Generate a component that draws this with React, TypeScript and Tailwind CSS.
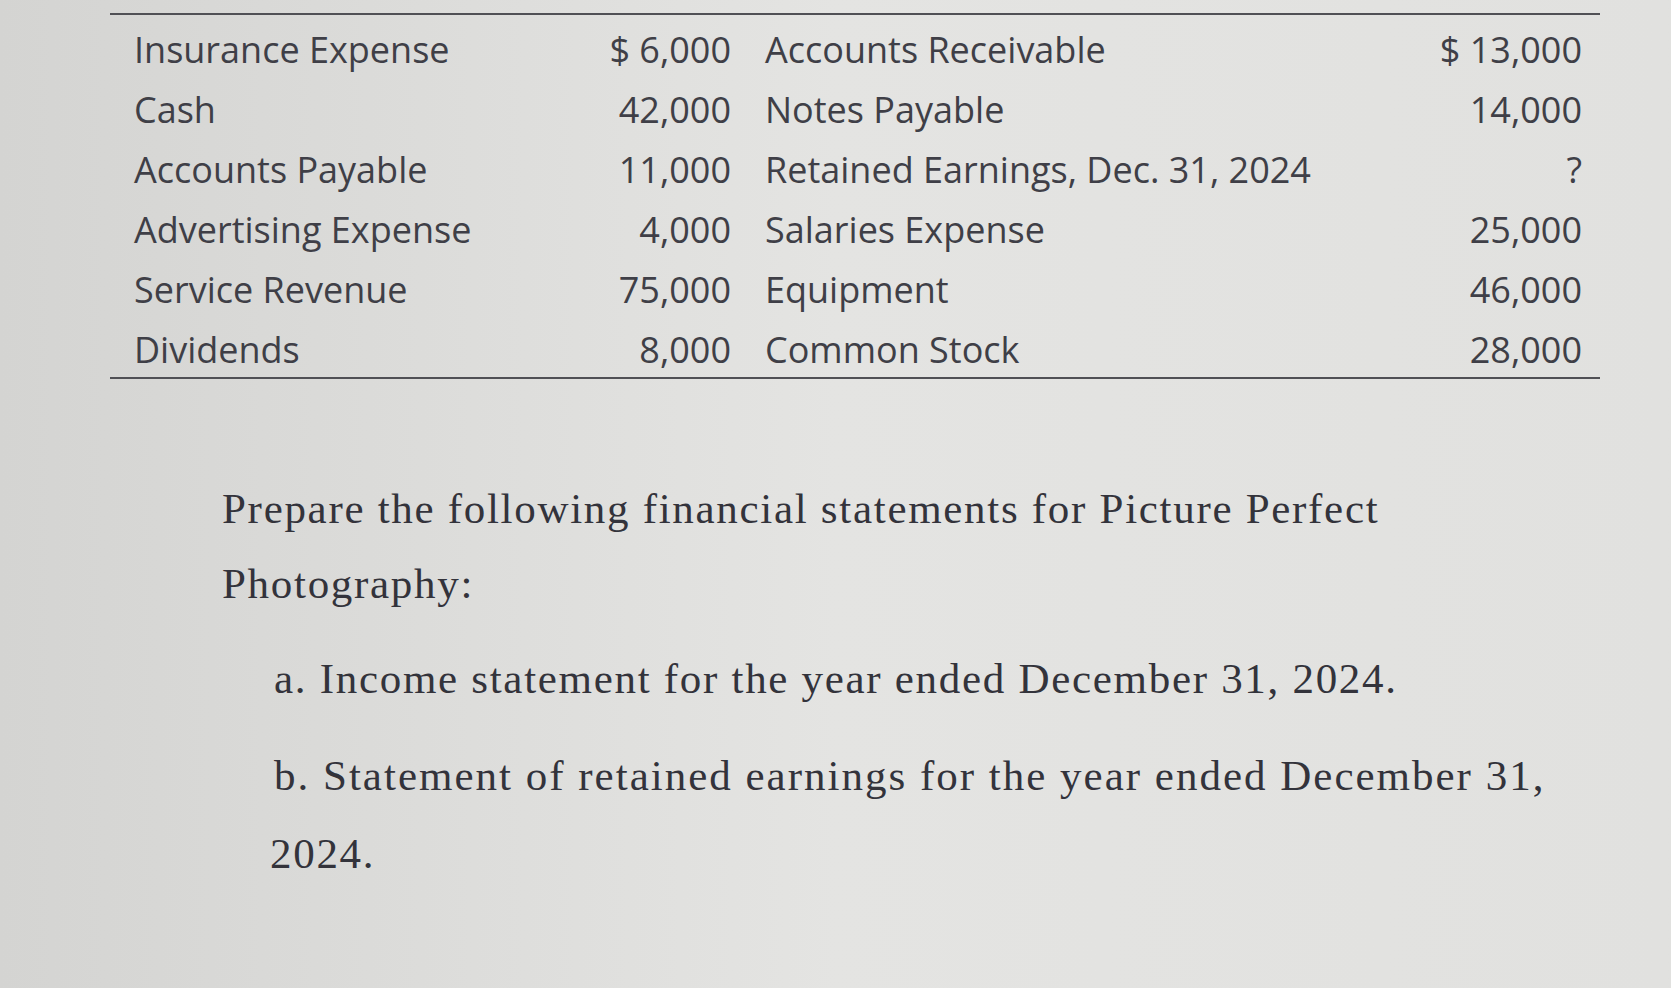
const rows = [
  ["Insurance Expense", "$ 6,000", "Accounts Receivable", "$ 13,000"],
  ["Cash", "42,000", "Notes Payable", "14,000"],
  ["Accounts Payable", "11,000", "Retained Earnings, Dec. 31, 2024", "?"],
  ["Advertising Expense", "4,000", "Salaries Expense", "25,000"],
  ["Service Revenue", "75,000", "Equipment", "46,000"],
  ["Dividends", "8,000", "Common Stock", "28,000"],
];

export default function App() {
  return (
    <div className="w-[1671px] h-[988px] overflow-hidden bg-gradient-to-r from-[#d4d4d2] via-[#e4e4e2] to-[#e1e1df] text-[#3f3f47]">
      <div className="pt-[13px]">
        {/* account table */}
        <div className="ml-[110px] w-[1490px] border-t-2 border-b-2 border-[#505055] h-[366px] pl-[24px] pr-[18px] pt-[5px] font-['Open_Sans',sans-serif] font-medium text-[36px]">
          {rows.map((r, i) => (
            <div key={i} className="grid grid-cols-[440px_157px_34px_650px_167px] h-[60px] items-center">
              <div>{r[0]}</div>
              <div className="text-right">{r[1]}</div>
              <div />
              <div>{r[2]}</div>
              <div className="text-right">{r[3]}</div>
            </div>
          ))}
        </div>

        {/* instructions */}
        <div className="mt-[92px] font-['Liberation_Serif',serif] text-[43px] tracking-[1.7px] text-[#33333b]">
          <div className="pl-[222px] leading-[75px]">
            <div>Prepare the following financial statements for Picture Perfect</div>
            <div>Photography:</div>
          </div>
          <div className="pl-[274px] mt-[20px] leading-[75px]">
            <div>a. Income statement for the year ended December 31, 2024.</div>
            <div className="mt-[22px] tracking-[2px]">b. Statement of retained earnings for the year ended December 31,</div>
            <div className="mt-[3px] -ml-[4px]">2024.</div>
          </div>
        </div>
      </div>
    </div>
  );
}
